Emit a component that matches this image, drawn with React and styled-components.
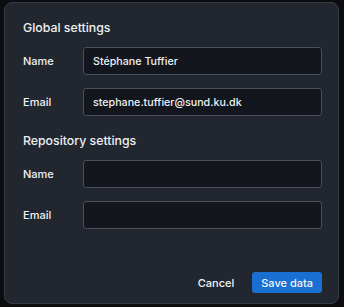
import React, { useState } from "react";
import styled, { createGlobalStyle } from "styled-components";

const GlobalStyle = createGlobalStyle`
  html, body {
    margin: 0;
    padding: 0;
    background: #0b0d11;
    font-family: Inter, "Noto Sans", "Liberation Sans", sans-serif;
  }
`;

function App() {
  const [globalName, setGlobalName] = useState("Stéphane Tuffier");
  const [globalEmail, setGlobalEmail] = useState("stephane.tuffier@sund.ku.dk");
  const [repoName, setRepoName] = useState("");
  const [repoEmail, setRepoEmail] = useState("");

  return (
    <Page>
      <GlobalStyle />
      <Dialog>
        <Section>
          <Heading>Global settings</Heading>
          <Row>
            <Label>Name</Label>
            <Input value={globalName} onChange={(e) => setGlobalName(e.target.value)} />
          </Row>
          <Row>
            <Label>Email</Label>
            <Input value={globalEmail} onChange={(e) => setGlobalEmail(e.target.value)} />
          </Row>
        </Section>
        <Section>
          <Heading>Repository settings</Heading>
          <Row>
            <Label>Name</Label>
            <Input value={repoName} onChange={(e) => setRepoName(e.target.value)} />
          </Row>
          <Row>
            <Label>Email</Label>
            <Input value={repoEmail} onChange={(e) => setRepoEmail(e.target.value)} />
          </Row>
        </Section>
        <Footer>
          <Button>Cancel</Button>
          <Button primary>Save data</Button>
        </Footer>
      </Dialog>
    </Page>
  );
}

const Page = styled.div`
  width: 344px;
  height: 307px;
  padding: 2px 5px 3px 4px;
  box-sizing: border-box;
`;

const Dialog = styled.div`
  height: 100%;
  box-sizing: border-box;
  background: #22272f;
  border: 1px solid #363c45;
  border-radius: 8px;
  padding: 17px 16px 10px 18px;
  display: flex;
  flex-direction: column;
  color: #eef1f5;
`;

const Section = styled.div`
  display: flex;
  flex-direction: column;
  gap: 13px;
  & + & {
    margin-top: 17px;
  }
`;

const Heading = styled.h2`
  margin: 0 0 -2px 0;
  font-size: 12.3px;
  line-height: 16px;
  font-weight: 500;
`;

const Row = styled.div`
  display: flex;
  align-items: center;
`;

const Label = styled.span`
  width: 60px;
  font-size: 11px;
  font-weight: 500;
`;

const Input = styled.input`
  flex: 1;
  height: 28px;
  box-sizing: border-box;
  background: #13161d;
  border: 1px solid #4a515b;
  border-radius: 3px;
  padding: 0 9px;
  color: #eef1f5;
  font-family: inherit;
  font-size: 10.7px;
  font-weight: 500;
  outline: none;
`;

const Footer = styled.div`
  margin-top: auto;
  display: flex;
  justify-content: flex-end;
  align-items: center;
  gap: 18px;
`;

const Button = styled.button`
  height: 21px;
  border: none;
  border-radius: 3px;
  padding: 0 ${(p) => (p.primary ? "9px" : "0")};
  background: ${(p) => (p.primary ? "#1a6fd3" : "transparent")};
  color: #f1f4f8;
  font-family: inherit;
  font-size: 11px;
  font-weight: 500;
  cursor: pointer;
`;

export default App;
